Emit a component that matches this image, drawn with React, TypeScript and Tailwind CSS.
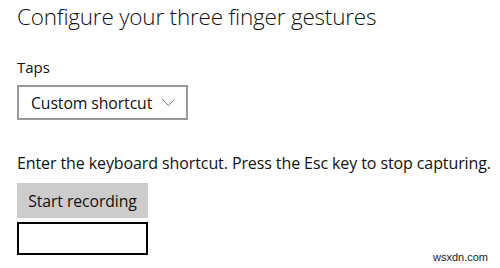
import React from "react";

export default function App() {
  return (
    <div className="relative w-[500px] h-[268px] bg-white overflow-hidden text-[#000]" style={{ fontFamily: '"Open Sans", "Noto Sans", sans-serif' }}>
      <div className="flex flex-col items-start pl-[17px]">
        <div className="mt-[2px] h-[30px] text-[22.5px] leading-[30px] font-light text-[#111] tracking-[-0.2px] whitespace-nowrap">Configure your three finger gestures</div>
        <div className="mt-[25px] h-[20px] text-[15px] leading-[20px] text-[#111]">Taps</div>
        <div className="mt-[8px] flex items-center w-[171px] h-[35px] border-2 border-[#999] pl-[12px] pr-[11px]">
          <span className="pt-[1px] text-[15.8px] leading-[20px] text-[#111] tracking-[-0.1px] whitespace-nowrap">Custom shortcut</span>
          <svg className="ml-auto" width="13" height="8" viewBox="0 0 13 8" fill="none">
            <path d="M0.5 0.5 L6.5 6.5 L12.5 0.5" stroke="#777" strokeWidth="1" />
          </svg>
        </div>
        <div className="mt-[32px] h-[22px] text-[16px] leading-[22px] text-[#111] tracking-[-0.1px] whitespace-nowrap">Enter the keyboard shortcut. Press the Esc key to stop capturing.</div>
        <div className="mt-[9px] w-[131px] h-[35px] bg-[#cccccc] flex items-center justify-center pt-[3px] text-[15.8px] text-[#111] tracking-[-0.1px] whitespace-nowrap">Start recording</div>
        <div className="mt-[4px] w-[131px] h-[33px] border-2 border-black bg-white" />
      </div>
      <div className="absolute right-[12px] bottom-[5px] text-[11px] leading-[12px] text-[#222]" style={{ fontFamily: '"Liberation Sans", sans-serif' }}>wsxdn.com</div>
    </div>
  );
}
